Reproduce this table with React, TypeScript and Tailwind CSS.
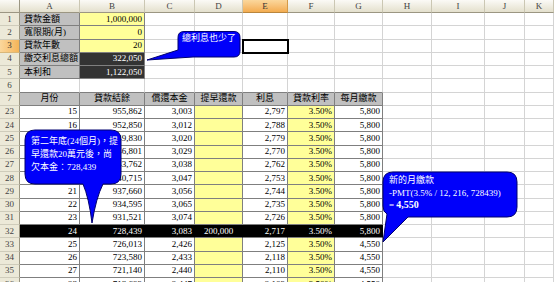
import React from 'react';

type V = 'w' | 'wd' | 'wb' | 'g' | 'y' | 'k' | 'b';
type A = 'l' | 'r' | 'c';
type C = { t?: string; v: V; a?: A; active?: boolean };

const COLS = ['A', 'B', 'C', 'D', 'E', 'F', 'G', 'H', 'I', 'J', 'K'];

const variantClass: Record<V, string> = {
  w: 'bg-white border-[#d4d4d4]',
  wd: 'bg-white border-[#7f7f7f]',
  wb: 'bg-white border-r-[#d4d4d4] border-b-[#7f7f7f]',
  g: 'bg-[#c0c0c0] border-[#7f7f7f]',
  y: 'bg-[#ffff99] border-[#7f7f7f]',
  k: 'bg-[#333333] border-[#7f7f7f] text-white',
  b: 'bg-black border-r-black border-b-[#7f7f7f] text-white',
};

const alignClass: Record<A, string> = {
  l: 'justify-start pl-[4px]',
  r: 'justify-end pr-[2px]',
  c: 'justify-center',
};

const GRID = 'grid grid-cols-[20px_60px_65px_50px_48px_45px_47px_48px_49px_53px_40px_1fr]';

function blanks(n: number, v: V = 'w'): C[] {
  return Array.from({ length: n }, () => ({ v }));
}

const top: { n: number; cells: C[] }[] = [
  { n: 1, cells: [{ t: '貸款金額', v: 'g', a: 'l' }, { t: '1,000,000', v: 'y', a: 'r' }, ...blanks(9)] },
  { n: 2, cells: [{ t: '寬限期(月)', v: 'g', a: 'l' }, { t: '0', v: 'y', a: 'r' }, ...blanks(9)] },
  {
    n: 3,
    cells: [
      { t: '貸款年數', v: 'g', a: 'l' },
      { t: '20', v: 'y', a: 'r' },
      ...blanks(2),
      { v: 'w', active: true },
      ...blanks(6),
    ],
  },
  { n: 4, cells: [{ t: '繳交利息總額', v: 'g', a: 'l' }, { t: '322,050', v: 'k', a: 'r' }, ...blanks(9)] },
  { n: 5, cells: [{ t: '本利和', v: 'g', a: 'l' }, { t: '1,122,050', v: 'k', a: 'r' }, ...blanks(9)] },
  { n: 6, cells: [...blanks(7, 'wb'), ...blanks(4)] },
  {
    n: 7,
    cells: [
      ...['月份', '貸款結餘', '償還本金', '提早還款', '利息', '貸款利率', '每月繳款'].map(
        (t): C => ({ t, v: 'g', a: 'c' })
      ),
      ...blanks(4),
    ],
  },
];

const data: string[][] = [
  ['23', '15', '955,862', '3,003', '', '2,797', '3.50%', '5,800'],
  ['24', '16', '952,850', '3,012', '', '2,788', '3.50%', '5,800'],
  ['25', '17', '949,830', '3,020', '', '2,779', '3.50%', '5,800'],
  ['26', '18', '946,801', '3,029', '', '2,770', '3.50%', '5,800'],
  ['27', '19', '943,762', '3,038', '', '2,762', '3.50%', '5,800'],
  ['28', '20', '940,715', '3,047', '', '2,753', '3.50%', '5,800'],
  ['29', '21', '937,660', '3,056', '', '2,744', '3.50%', '5,800'],
  ['30', '22', '934,595', '3,065', '', '2,735', '3.50%', '5,800'],
  ['31', '23', '931,521', '3,074', '', '2,726', '3.50%', '5,800'],
  ['32', '24', '728,439', '3,083', '200,000', '2,717', '3.50%', '5,800'],
  ['33', '25', '726,013', '2,426', '', '2,125', '3.50%', '4,550'],
  ['34', '26', '723,580', '2,433', '', '2,118', '3.50%', '4,550'],
  ['35', '27', '721,140', '2,440', '', '2,110', '3.50%', '4,550'],
  ['36', '28', '718,693', '2,447', '', '2,103', '3.50%', '4,550'],
];

const bottom: { n: number; cells: C[] }[] = data.map((r) => {
  const black = r[0] === '32';
  const cells: C[] = r.slice(1).map((t, i) => {
    if (black) return { t, v: 'b' as V, a: (i === 3 ? 'c' : 'r') as A };
    const v: V = i === 3 || i === 5 ? 'y' : 'wd';
    return { t, v, a: 'r' as A };
  });
  return { n: Number(r[0]), cells: [...cells, ...blanks(4)] };
});

function Row({ n, cells }: { n: number; cells: C[] }) {
  return (
    <div className={`${GRID} h-[13.25px]`}>
      <div
        className={
          n === 3
            ? 'flex items-center justify-center border-r border-b border-r-[#9b9682] border-b-[#d9b77a] bg-linear-to-r from-[#fbd79c] to-[#f4b457] text-[#333]'
            : 'flex items-center justify-center border-r border-b border-r-[#9b9682] border-b-[#cfccbb] bg-[#ece9d8] text-[#444]'
        }
      >
        {n}
      </div>
      {cells.map((c, i) => (
        <div
          key={i}
          className={[
            'flex items-center overflow-hidden whitespace-nowrap border-r border-b',
            variantClass[c.v],
            alignClass[c.a ?? 'r'],
            c.active ? 'relative z-10 outline-2 outline-solid outline-black -outline-offset-1' : '',
          ].join(' ')}
        >
          {c.t}
        </div>
      ))}
    </div>
  );
}

function HeaderRow() {
  return (
    <div className={`${GRID} h-[13px]`}>
      <div className="border-r border-b border-r-[#9b9682] border-b-[#9b9682] bg-linear-to-b from-[#fbfaf6] to-[#e4e0cd]" />
      {COLS.map((c) => (
        <div
          key={c}
          className={
            c === 'E'
              ? 'flex items-center justify-center border-r border-b border-r-[#d59a47] border-b-[#b9863d] bg-linear-to-b from-[#fbd79c] to-[#f3ac4f] text-[#333]'
              : 'flex items-center justify-center border-r border-b border-r-[#cbc7b3] border-b-[#9b9682] bg-linear-to-b from-[#fbfaf6] to-[#e4e0cd] text-[#444]'
          }
        >
          {c}
        </div>
      ))}
    </div>
  );
}

function Callouts() {
  return (
    <>
      <svg className="absolute left-0 top-0 pointer-events-none" width="554" height="282" viewBox="0 0 554 282">
        <path
          d="M184,31.5 H234 Q240,31.5 240,37.5 V51 Q240,57 234,57 H193 L147,60 L178,50 V37.5 Q178,31.5 184,31.5 Z"
          fill="#0000fa"
          stroke="#00006e"
          strokeWidth="1"
        />
        <path
          d="M35,130 H111 Q121,130 121,140 V174 Q121,184 111,184 H103 Q96,198 92,223 Q89,198 83,184 H35 Q25,184 25,174 V140 Q25,130 35,130 Z"
          fill="#0000fa"
          stroke="#00006e"
          strokeWidth="1"
        />
        <path
          d="M393,172 H507 Q517,172 517,182 V207 Q517,217 507,217 H408 L383,242 L387,214 Q383,212 383,206 V182 Q383,172 393,172 Z"
          fill="#0000fa"
          stroke="#00006e"
          strokeWidth="1"
        />
      </svg>
      <div className="absolute left-[182px] top-[33px] text-white text-[9px] leading-[11px] whitespace-nowrap">
        總利息也少了
      </div>
      <div className="absolute left-[31px] top-[135px] text-white text-[9px] leading-[13px] whitespace-nowrap">
        <div>第二年底(24個月)，提</div>
        <div>早還款20萬元後，尚</div>
        <div>欠本金：728,439</div>
      </div>
      <div className="absolute left-[389px] top-[174px] text-white text-[9px] leading-[12.5px] whitespace-nowrap">
        <div>新的月繳款</div>
        <div>-PMT(3.5% / 12, 216, 728439)</div>
        <div>
          = <span className="font-bold text-[10px]">4,550</span>
        </div>
      </div>
    </>
  );
}

export default function App() {
  return (
    <div className="relative w-[554px] h-[282px] overflow-hidden bg-white font-['Liberation_Serif','Noto_Sans_CJK_TC',serif] text-[9px] leading-none text-black">
      <HeaderRow />
      {top.map((r) => (
        <Row key={r.n} n={r.n} cells={r.cells} />
      ))}
      {bottom.map((r) => (
        <Row key={r.n} n={r.n} cells={r.cells} />
      ))}
      <Callouts />
    </div>
  );
}
